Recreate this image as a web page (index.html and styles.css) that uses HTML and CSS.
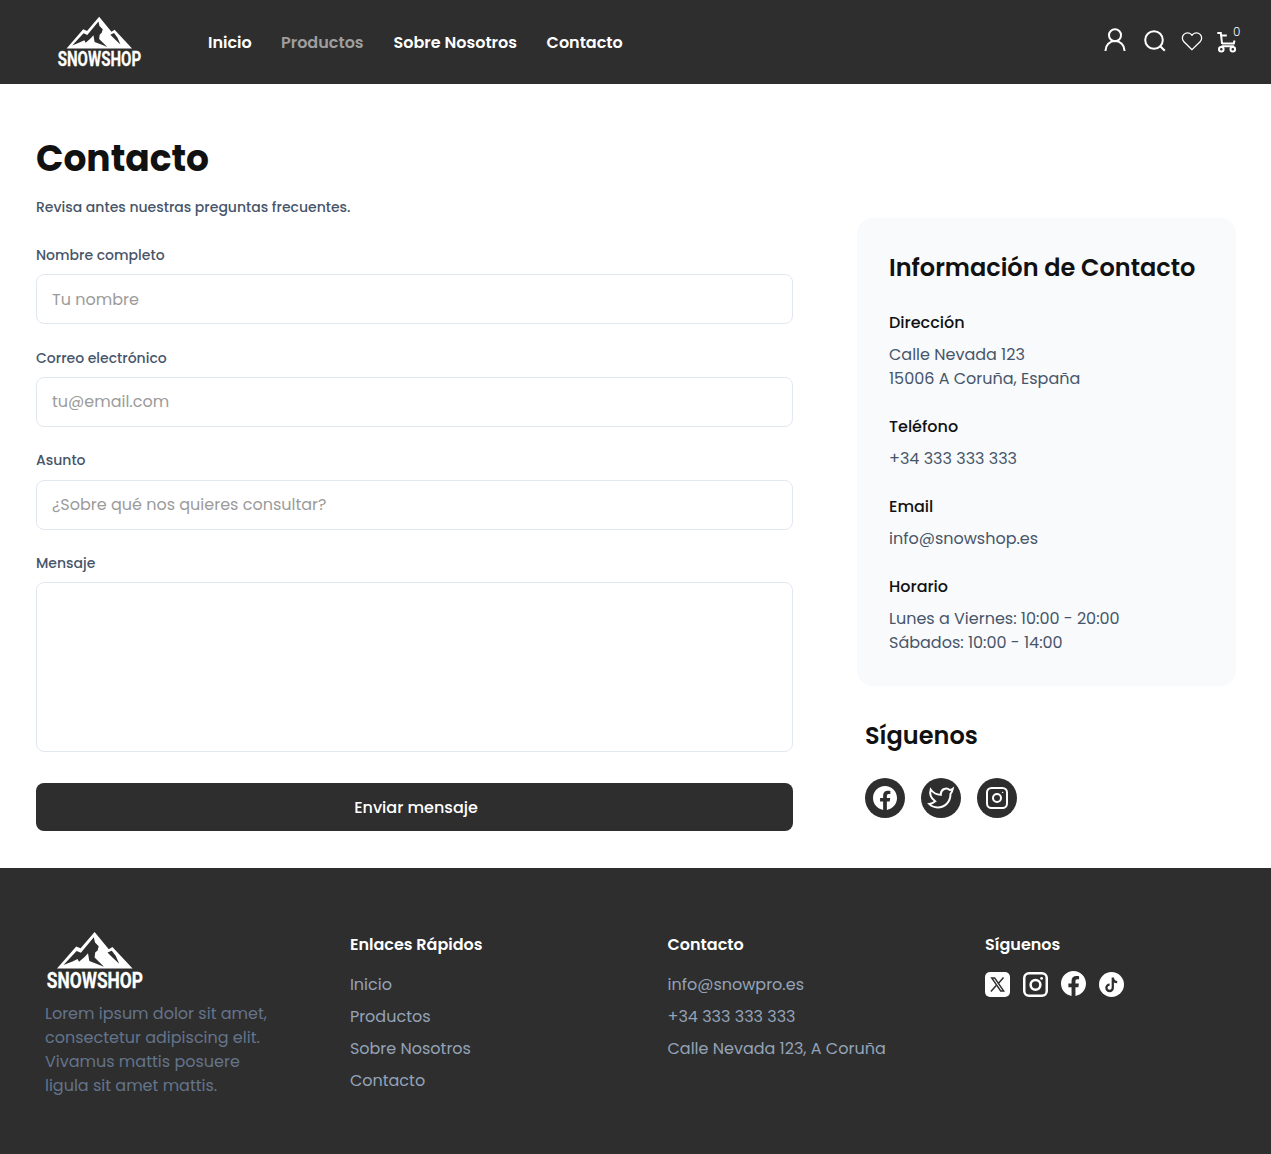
FILE: index.html
```html
<!DOCTYPE html>
<html lang="es">
<head>
<meta charset="utf-8">
<title>Snowshop - Contacto</title>
<link rel="stylesheet" href="styles.css">
</head>
<body>
<svg width="0" height="0" class="defs">
  <symbol id="logo" viewBox="0 0 98 66">
    <path fill="#fff" fill-rule="evenodd" d="M11 37.6 L30.2 15.4 L34.6 17.2 L48.6 1 L62.8 18.2 L66.4 16 L86.6 37.6Z M17.5 34 L30.6 20 L34.9 21.8 L47.8 6.3 L49 11.5 L52.7 15.3 L51.6 19.4 L49.2 21.5 L48.6 26.5 L58 35.8 L51 33 L43.3 30 L42 22.3 L38.6 26 L33 30.8 L31.5 28 L26.5 30.4Z M61.5 21.5 L65.8 19.7 L69.8 25 L73.2 32.8 L67 27Z"/>
    <text x="0.8" y="57.2" class="logo-text" textLength="96.2" lengthAdjust="spacingAndGlyphs">SNOWSHOP</text>
  </symbol>
  <symbol id="facebook" viewBox="0 0 24 24">
    <path fill="#fff" d="M24 12.073c0-6.627-5.373-12-12-12s-12 5.373-12 12c0 5.99 4.388 10.954 10.125 11.854v-8.385H7.078v-3.47h3.047V9.43c0-3.007 1.792-4.669 4.533-4.669 1.312 0 2.686.235 2.686.235v2.953H15.83c-1.491 0-1.956.925-1.956 1.874v2.25h3.328l-.532 3.47h-2.796v8.385C19.612 23.027 24 18.062 24 12.073z"/>
  </symbol>
</svg>

<header class="header">
  <svg class="header-logo"><use href="#logo"/></svg>
  <nav class="nav">
    <a>Inicio</a>
    <a class="muted">Productos</a>
    <a>Sobre Nosotros</a>
    <a>Contacto</a>
  </nav>
  <div class="actions">
    <svg class="line" width="22" height="24" viewBox="0 0 22 24" stroke-width="2"><circle cx="11" cy="7.3" r="6"/><path d="M1.5 23v-.5a9.5 9.5 0 0 1 19 0v.5"/></svg>
    <svg class="line" width="22" height="22" viewBox="0 0 22 22" stroke-width="2"><circle cx="10" cy="10" r="8.8"/><path d="M16 16l4.8 4.8"/></svg>
    <svg class="line heart" width="22" height="20" viewBox="0 0 22 20" stroke-width="1.3"><path d="M11 18.7L2.9 10.7a5.1 5.1 0 0 1 0-7.3c2-2 5.4-2 7.3 0l.8.9.8-.9c1.9-2 5.3-2 7.3 0a5.1 5.1 0 0 1 0 7.3z"/></svg>
    <div class="cart">
      <svg class="line" width="20" height="22" viewBox="0 0 20 22" stroke-width="2"><path d="M.3 2h3.5l1.3 11M4.4 4.6h5.4M5 12.400h11.8l.7-3M17 15.300H4.500"/><circle cx="4.300" cy="18.200" r="2.300"/><circle cx="15.800" cy="18.200" r="2.300"/></svg>
      <span class="count">0</span>
    </div>
  </div>
</header>

<main class="main">
  <section class="form-side">
    <h1>Contacto</h1>
    <p class="hint">Revisa antes nuestras preguntas frecuentes.</p>
    <form class="form">
      <label class="field">Nombre completo<input type="text" placeholder="Tu nombre"></label>
      <label class="field">Correo electrónico<input type="email" placeholder="tu@email.com"></label>
      <label class="field">Asunto<input type="text" placeholder="¿Sobre qué nos quieres consultar?"></label>
      <label class="field">Mensaje<textarea></textarea></label>
      <button type="button" class="submit">Enviar mensaje</button>
    </form>
  </section>
  <aside class="info-side">
    <div class="card">
      <h2>Información de Contacto</h2>
      <dl class="details">
        <div><dt>Dirección</dt><dd>Calle Nevada 123<br>15006 A Coruña, España</dd></div>
        <div><dt>Teléfono</dt><dd>+34 333 333 333</dd></div>
        <div><dt>Email</dt><dd>info@snowshop.es</dd></div>
        <div><dt>Horario</dt><dd>Lunes a Viernes: 10:00 - 20:00<br>Sábados: 10:00 - 14:00</dd></div>
      </dl>
    </div>
    <div class="follow">
      <h2>Síguenos</h2>
      <div class="circles">
        <a class="circle"><svg width="24" height="24"><use href="#facebook"/></svg></a>
        <a class="circle"><svg class="line" width="26" height="24" viewBox="0 0 26 24" stroke-width="2"><path d="M24.8 2.7c-1 .7-2 1.1-3.1 1.3A5.3 5.3 0 0 0 12.9 7.5v1.3C8.5 8.9 5.1 6.7 2.7 3.5c-1.4 4.7.3 8.8 4.5 11.7C5.4 16.7 3.3 17.6 1.2 17.9c1.9 2 5 3.5 8.4 3.5 7.4 0 12.8-5.4 12.9-13.5C23.6 6.8 24.5 4.7 24.8 2.7z"/></svg></a>
        <a class="circle"><svg class="line" width="22" height="22" viewBox="0 0 22 22" stroke-width="2"><rect x="1" y="1" width="20" height="20" rx="4.5"/><circle cx="11" cy="11" r="4"/><circle cx="16.6" cy="5.4" r=".7" fill="#fff" stroke="none"/></svg></a>
      </div>
    </div>
  </aside>
</main>

<footer class="footer">
  <div class="brand">
    <svg class="footer-logo"><use href="#logo"/></svg>
    <p>Lorem ipsum dolor sit amet, consectetur adipiscing elit. Vivamus mattis posuere ligula sit amet mattis.</p>
  </div>
  <div>
    <h3>Enlaces Rápidos</h3>
    <ul><li>Inicio</li><li>Productos</li><li>Sobre Nosotros</li><li>Contacto</li></ul>
  </div>
  <div>
    <h3>Contacto</h3>
    <ul><li>info@snowpro.es</li><li>+34 333 333 333</li><li>Calle Nevada 123, A Coruña</li></ul>
  </div>
  <div>
    <h3>Síguenos</h3>
    <div class="badges">
      <svg width="25" height="25" viewBox="0 0 25 25"><rect width="25" height="25" rx="5" fill="#fff"/><path d="M6.7 6h3l9 13h-3z" fill="#fff" stroke="#2e2e2e" stroke-width="1.4"/><path d="M18.5 5.5l-5 5.800M11.200 13.600l-5.300 6" stroke="#2e2e2e" stroke-width="1.500"/></svg>
      <svg class="line" width="25" height="25" viewBox="0 0 25 25" stroke-width="2.500"><rect x="1.250" y="1.250" width="22.500" height="22.500" rx="4.800"/><circle cx="12.500" cy="12.800" r="4.900"/><circle cx="18.600" cy="6.400" r="1.400" fill="#fff" stroke="none"/></svg>
      <svg class="raised" width="25" height="25"><use href="#facebook"/></svg>
      <svg width="25" height="25" viewBox="0 0 25 25"><circle cx="12.500" cy="12.500" r="12.500" fill="#fff"/><path d="M13.800 5.500v10.300a3.200 3.200 0 1 1-3.200-3.200M13.800 6c.3 2.500 1.900 4 4.400 4.200" fill="none" stroke="#2e2e2e" stroke-width="2.300"/></svg>
    </div>
  </div>
</footer>
</body>
</html>
```
FILE: styles.css
```css
* { box-sizing: border-box; margin: 0; padding: 0; }
body { font: 400 16px/24px Poppins, Inter, sans-serif; background: #fff; color: #111; }
svg { display: block; flex: none; }
svg, symbol { overflow: visible; }
.defs { position: absolute; }
.line { fill: none; stroke: #fff; }
.logo-text { font: 700 22.5px Roboto, sans-serif; fill: #fff; stroke: #fff; stroke-width: .3px; }

.header { display: flex; align-items: center; height: 84px; padding: 0 30px 0 57px; background: #2e2e2e; }
.header-logo { width: 85px; height: 57.2px; margin-top: 5px; }
.nav { display: flex; gap: 29.6px; margin-left: 66px; padding-top: 2px; font-weight: 600; color: #fff; }
.nav .muted { margin-left: -.4px; margin-right: .4px; color: #9e9e9e; }
.actions { display: flex; align-items: flex-start; height: 28px; margin-left: auto; }
.actions > svg + svg { margin-left: 18px; margin-top: 2px; }
.actions > .heart { margin-left: 15px; margin-top: 3px; }
.cart { position: relative; width: 24px; margin-left: 14px; padding-top: 3px; }
.count { position: absolute; left: 16px; top: -5px; font: 300 12px/18px Poppins, Inter, sans-serif; color: #fff; }

.main { display: grid; grid-template-columns: 757px 379px; gap: 64px; height: 784px; padding: 48px 35px 0 36px; }
h1 { font-size: 36px; line-height: 54px; font-weight: 700; }
h2 { font-size: 24px; line-height: 36px; font-weight: 600; }
.hint { margin-top: 11px; font-size: 14px; line-height: 20px; font-weight: 500; color: #475569; }
.form { display: flex; flex-direction: column; gap: 23.55px; margin-top: 27.8px; }
.field { display: flex; flex-direction: column; gap: 9.25px; font-size: 14px; line-height: 20px; font-weight: 500; color: #475569; }
.field input, .field textarea { width: 100%; height: 50px; padding: 12px 15px; border: 1px solid #e2e8f0; border-radius: 8px; background: #fff; font: 400 16px/24px Poppins, Inter, sans-serif; color: #111; }
.field textarea { height: 170px; resize: none; }
.field ::placeholder { color: #9b9b9b; opacity: 1; }
.submit { height: 48px; margin-top: 7px; padding: 2px 0 0 3px; border: 0; border-radius: 8px; background: #2e2e2e; color: #fff; font: 500 16px/24px Poppins, Inter, sans-serif; }

.info-side { padding-top: 86px; }
.card { padding: 32px 32px 31px; border-radius: 16px; background: #f8fafc; }
.details { display: flex; flex-direction: column; gap: 24px; margin-top: 25px; }
dt { font-weight: 500; }
dd { margin-top: 8px; color: #475569; }
.follow { margin-top: 32px; padding-left: 8px; }
.circles { display: flex; gap: 16px; margin-top: 24px; }
.circle { display: flex; align-items: center; justify-content: center; width: 40px; height: 40px; border-radius: 50%; background: #2e2e2e; }

.footer { display: grid; grid-template-columns: repeat(4, 1fr); gap: 64px; height: 286px; padding: 65px 32.3px 0 32.3px; background: #2e2e2e; color: #94a3b8; }
.brand { padding-left: 12.7px; color: #64748b; }
.footer-logo { width: 98px; height: 66px; margin: -2px 0 5px 1px; }
h3 { font-size: 16px; line-height: 24px; font-weight: 600; color: #fff; }
ul { display: flex; flex-direction: column; gap: 8px; margin-top: 16px; list-style: none; }
.badges { display: flex; gap: 13px; margin-top: 15px; }
.badges .raised { margin-top: -1px; }
```
